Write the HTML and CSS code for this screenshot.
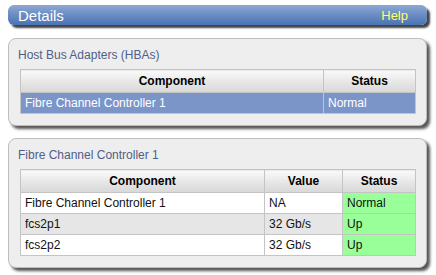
FILE: index.html
```html
<!DOCTYPE html>
<html>
<head>
    <title>Details</title>
    <link rel="stylesheet" href="styles.css">
</head>
<body>
    <div class="titlebar">
        <span class="titlebar-text">Details</span>
        <a class="help" href="#">Help</a>
    </div>

    <div class="panel">
        <div class="panel-title">Host Bus Adapters (HBAs)</div>
        <table class="grid">
            <tr>
                <th style="width: 294px;">Component</th>
                <th>Status</th>
            </tr>
            <tr class="selected">
                <td>Fibre Channel Controller 1</td>
                <td>Normal</td>
            </tr>
        </table>
    </div>

    <div class="panel">
        <div class="panel-title">Fibre Channel Controller 1</div>
        <table class="grid">
            <tr>
                <th style="width: 235px;">Component</th>
                <th style="width: 69px;">Value</th>
                <th>Status</th>
            </tr>
            <tr>
                <td>Fibre Channel Controller 1</td>
                <td>NA</td>
                <td class="ok">Normal</td>
            </tr>
            <tr class="alt">
                <td>fcs2p1</td>
                <td>32 Gb/s</td>
                <td class="ok">Up</td>
            </tr>
            <tr>
                <td>fcs2p2</td>
                <td>32 Gb/s</td>
                <td class="ok">Up</td>
            </tr>
        </table>
    </div>
</body>
</html>
```

FILE: styles.css
```css
body {
    font-family: "Liberation Sans", Arial, sans-serif;
    font-size: 12px;
    background: #ffffff;
    margin: 0;
    padding: 5px 9px 0 8px;
}

.titlebar {
    display: flex;
    justify-content: space-between;
    align-items: center;
    height: 20px;
    padding: 0 19px 0 10px;
    border-radius: 6px;
    background: linear-gradient(to bottom, #8ea8d2, #6b8cc3 50%, #4a73b3);
    box-shadow: 3px 3px 2px #444;
    margin-bottom: 13px;
}

.titlebar-text {
    color: #ffffff;
    font-size: 15px;
}

.help {
    color: #ffff66;
    font-size: 13px;
    text-decoration: none;
}

.panel {
    background: #eeeeee;
    border: 1px solid #bdbdbd;
    border-radius: 8px;
    box-shadow: 3px 3px 3px #555;
    padding: 8px 10px 11px 11px;
    margin-bottom: 12px;
}

.panel-title {
    color: #4f5f87;
    font-size: 12px;
    line-height: 16px;
    margin: 0 0 6px -2px;
}

.grid {
    width: 100%;
    border-collapse: collapse;
    background: #ffffff;
}

.grid th,
.grid td {
    border: 1px solid #c4c4c4;
    padding: 0 4px;
    text-align: left;
}

.grid th {
    height: 22px;
    text-align: center;
    font-weight: bold;
    color: #000;
    background: linear-gradient(to bottom, #fafafa, #e4e4e4 60%, #d8d8d8);
}

.grid td {
    height: 20px;
    color: #111;
}

.grid tr.selected td {
    background: #7b95c9;
    color: #ffffff;
}

.grid tr.alt td {
    background: #e6e6e6;
}

.grid td.ok {
    background: #99ff99;
}

.grid tr.alt td.ok {
    background: #99ff99;
}
```
